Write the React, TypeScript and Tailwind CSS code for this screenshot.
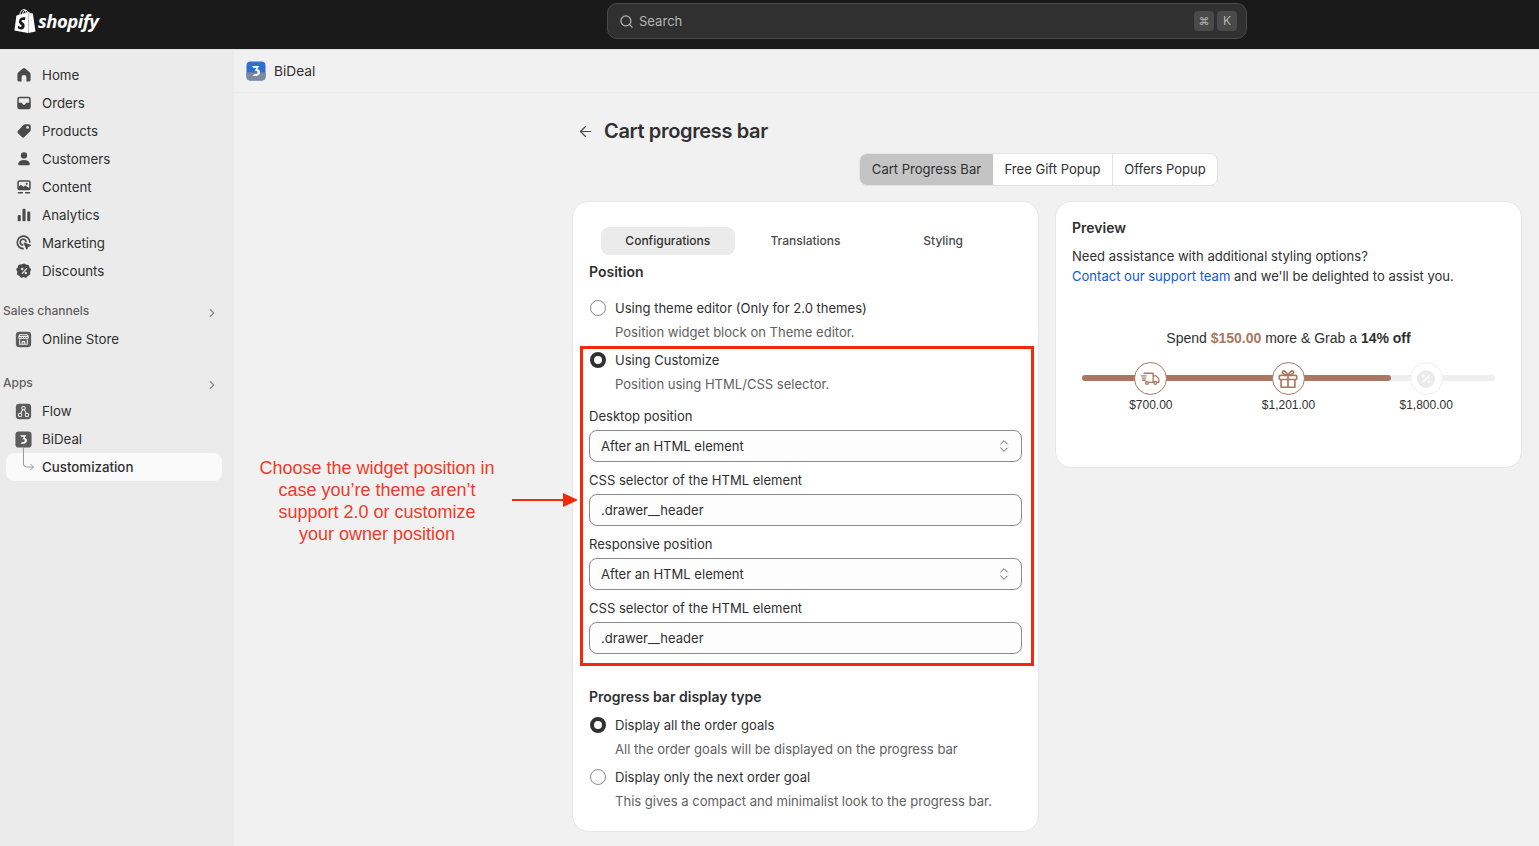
import { ArrowLeft, ChevronRight, ChevronsUpDown, Search } from 'lucide-react';
import { SiShopify } from 'react-icons/si';
import { clsx } from 'clsx';

const ic = "w-[18px] h-[18px] text-[#4a4a4a] shrink-0";

function HomeIcon() {
  return (
    <svg viewBox="0 0 20 20" className={ic} fill="currentColor">
      <path d="M8.600 2.900a2.200 2.200 0 0 1 2.800 0l5 4.200c.6.5.9 1.100.9 1.900v6.200c0 1.100-.9 2-2 2h-2.600v-4.400a2.700 2.700 0 0 0-5.400 0v4.400h-2.600c-1.100 0-2-.9-2-2v-6.200c0-.8.3-1.400.9-1.900z" />
    </svg>
  );
}

function OrdersIcon() {
  return (
    <svg viewBox="0 0 20 20" className={ic} fill="currentColor">
      <path fillRule="evenodd" d="M5 3h10a2.500 2.500 0 0 1 2.500 2.500v9A2.500 2.500 0 0 1 15 17H5a2.500 2.500 0 0 1-2.500-2.500v-9A2.500 2.500 0 0 1 5 3m-.8 6.800h2.600c.7 0 1.100.4 1.400 1 .4.800 1.100 1.300 1.800 1.300s1.400-.5 1.800-1.300c.3-.6.7-1 1.400-1h2.600V5.500c0-.5-.4-.9-.8-.9H5c-.4 0-.8.4-.8.900z" />
    </svg>
  );
}

function TagIcon() {
  return (
    <svg viewBox="0 0 20 20" className={ic} fill="currentColor">
      <path fillRule="evenodd" d="M11.500 2.500h4a2 2 0 0 1 2 2v4c0 .8-.3 1.500-.9 2l-6.200 6.200a2 2 0 0 1-2.800 0l-4.300-4.300a2 2 0 0 1 0-2.800L9.500 3.400c.5-.6 1.200-.9 2-.9m2.500 5a1.500 1.500 0 1 0 0-3 1.500 1.500 0 0 0 0 3" />
    </svg>
  );
}

function PersonIcon() {
  return (
    <svg viewBox="0 0 20 20" className={ic} fill="currentColor">
      <circle cx="10" cy="6" r="3.500" />
      <path d="M10 11c-3.500 0-6.200 1.800-6.500 4.300-.1 1 .7 1.700 1.600 1.700h9.800c.9 0 1.700-.7 1.600-1.700-.3-2.500-3-4.300-6.500-4.300" />
    </svg>
  );
}

function ContentIcon() {
  return (
    <svg viewBox="0 0 20 20" className={ic} fill="currentColor">
      <path fillRule="evenodd" d="M5 2.500h10A2.500 2.500 0 0 1 17.500 5v6a2.500 2.500 0 0 1-2.500 2.500H5A2.500 2.500 0 0 1 2.500 11V5A2.500 2.500 0 0 1 5 2.500M4.200 9.800l2.500-2.300 2.600 2.200 2.200-1.500 4.300 2.800V5c0-.5-.4-.8-.8-.8H5c-.4 0-.8.3-.8.800z" />
      <circle cx="13" cy="6.500" r="1.200" />
      <rect x="3" y="15.500" width="6" height="1.600" rx=".8" />
      <rect x="11" y="15.500" width="6" height="1.600" rx=".8" />
    </svg>
  );
}

function BarsIcon() {
  return (
    <svg viewBox="0 0 20 20" className={ic} fill="currentColor">
      <rect x="3" y="10" width="3.400" height="7" rx="1.200" />
      <rect x="8.300" y="3" width="3.400" height="14" rx="1.200" />
      <rect x="13.600" y="6" width="3.400" height="11" rx="1.200" />
    </svg>
  );
}

function TargetIcon() {
  return (
    <svg viewBox="0 0 20 20" className={ic} fill="none" stroke="currentColor">
      <path strokeWidth="1.800" strokeLinecap="round" d="M9 16.300A7 7 0 1 1 16.500 9" />
      <path strokeWidth="1.800" strokeLinecap="round" d="M8.500 12.200a3.200 3.200 0 1 1 3.700-3.700" />
      <path fill="currentColor" strokeWidth="1" strokeLinejoin="round" d="m10 10 7.500 2.600-3 1.300-1.400 3.100z" />
    </svg>
  );
}

function DiscountIcon() {
  return (
    <svg viewBox="0 0 20 20" className={ic} fill="currentColor">
      <path fillRule="evenodd" d="M8.500 2.300a2.200 2.200 0 0 1 3 0l.9.8 1.200-.1a2.200 2.200 0 0 1 2.300 2l.1 1.200 1 .8a2.200 2.200 0 0 1 .3 3l-.8 1 .4 1.200a2.200 2.200 0 0 1-1.500 2.700l-1.200.3-.6 1.100a2.200 2.200 0 0 1-2.900.9l-1.100-.5-1.100.5a2.200 2.200 0 0 1-2.900-.9l-.6-1.100-1.200-.3A2.200 2.200 0 0 1 2.300 12l.4-1.200-.8-1a2.200 2.200 0 0 1 .3-3l1-.8.100-1.200a2.200 2.200 0 0 1 2.300-2l1.200.1zM12.800 6.300l-5.600 6.400 1 .9 5.600-6.400zM8 6.500a1.300 1.300 0 1 0 0 2.600 1.300 1.300 0 0 0 0-2.600m4 4.400a1.300 1.300 0 1 0 0 2.600 1.300 1.300 0 0 0 0-2.600" />
    </svg>
  );
}

function StoreIcon() {
  return (
    <svg viewBox="0 0 20 20" className="w-[17px] h-[17px] shrink-0">
      <rect x="1" y="1" width="18" height="18" rx="4" fill="#5c5c5c" />
      <path d="M5 6.500h10M4.500 6.500 5.500 4.500h9l1 2v1.200a1.400 1.400 0 0 1-2.800 0 1.400 1.400 0 0 1-2.700 0 1.400 1.400 0 0 1-2.700 0 1.400 1.400 0 0 1-2.800 0zM5.500 10v5.500h9V10M8.500 15.500V12.500h3v3" fill="none" stroke="#f4f4f4" strokeWidth="1.200" strokeLinejoin="round" />
    </svg>
  );
}

function FlowIcon() {
  return (
    <svg viewBox="0 0 20 20" className="w-[17px] h-[17px] shrink-0">
      <rect x="1" y="1" width="18" height="18" rx="4" fill="#5c5c5c" />
      <g fill="none" stroke="#f4f4f4" strokeWidth="1.200">
        <circle cx="10" cy="6" r="2" />
        <circle cx="6" cy="14" r="2" />
        <circle cx="14" cy="14" r="2" />
        <path d="m9 7.800-2.200 4.400M11 7.800l2.200 4.400" />
      </g>
    </svg>
  );
}

function BiDealLogo({ size, gray }: { size: string; gray?: boolean }) {
  return (
    <svg viewBox="0 0 20 20" className={clsx(size, "shrink-0")}>
      <rect x="0.500" y="0.500" width="19" height="19" rx="4" fill={gray ? "#5c5c5c" : "#2f6fd0"} />
      {!gray && <path d="M0.500 11.500h19v4a4 4 0 0 1-4 4h-11a4 4 0 0 1-4-4z" fill="#7d8a9c" />}
      <path d="M6 5h7.500l-2.500 3.300c2.300.2 3 1.300 3 2.900 0 2.200-1.700 3.800-4.500 3.800H6.500l1.500-1.800c2 .3 3.600-.2 3.600-1.900 0-1.200-1-1.700-3.100-1.600l2-2.800H7.500z" fill="#fff" />
    </svg>
  );
}

function NavItem({ icon, label, active }: { icon: React.ReactNode; label: string; active?: boolean }) {
  return (
    <div className={clsx("relative h-7 ml-[6px] mr-3 flex items-center pl-[9px] gap-[10px] rounded-lg", active && "bg-[#fafafa]")}>
      <span className="w-[17px] flex justify-center">{icon}</span>
      <span className={clsx("pt-[2px] text-[#303030] text-[13.300px]", active && "font-medium")}>{label}</span>
    </div>
  );
}

function SectionLabel({ label }: { label: string }) {
  return (
    <div className="h-7 flex items-center justify-between pl-[3px] pr-[15px] text-[12px] font-medium text-[#616161]">
      <span>{label}</span>
      <ChevronRight size={14} className="text-[#8a8a8a] mt-[3px]" />
    </div>
  );
}

function Sidebar() {
  return (
    <aside className="w-[234px] shrink-0 bg-[#ebebeb] pt-[11px]">
      <NavItem icon={<HomeIcon />} label="Home" />
      <NavItem icon={<OrdersIcon />} label="Orders" />
      <NavItem icon={<TagIcon />} label="Products" />
      <NavItem icon={<PersonIcon />} label="Customers" />
      <NavItem icon={<ContentIcon />} label="Content" />
      <NavItem icon={<BarsIcon />} label="Analytics" />
      <NavItem icon={<TargetIcon />} label="Marketing" />
      <NavItem icon={<DiscountIcon />} label="Discounts" />
      <div className="mt-[12px]">
        <SectionLabel label="Sales channels" />
        <NavItem icon={<StoreIcon />} label="Online Store" />
      </div>
      <div className="mt-[16px]">
        <SectionLabel label="Apps" />
        <NavItem icon={<FlowIcon />} label="Flow" />
        <NavItem icon={<BiDealLogo size="w-[17px] h-[17px]" gray />} label="BiDeal" />
        <div className="relative">
          <NavItem icon={null} label="Customization" active />
          <svg className="absolute left-[20px] top-[-5px] text-[#9a9a9a]" width="16" height="24" viewBox="0 0 16 24" fill="none" stroke="currentColor" strokeWidth="1">
            <path d="M3.500 0v16a3 3 0 0 0 3 3h7M10.500 16l3 3-3 3" />
          </svg>
        </div>
      </div>
    </aside>
  );
}

function Radio({ checked, label, help }: { checked?: boolean; label: string; help: string }) {
  return (
    <div className="h-[52px] pl-[1px]">
      <div className="h-6 flex items-center gap-[9px]">
        {checked ? (
          <span className="-mt-[2px] w-4 h-4 rounded-full border-[4.500px] border-[#303030] bg-white shrink-0" />
        ) : (
          <span className="-mt-[2px] w-4 h-4 rounded-full border border-[#8a8a8a] bg-[#fdfdfd] shrink-0" />
        )}
        <span className="text-[#303030]">{label}</span>
      </div>
      <div className="h-6 pl-[25px] flex items-center text-[#616161]">{help}</div>
    </div>
  );
}

function Field({ label, value, select, className }: { label: string; value: string; select?: boolean; className?: string }) {
  return (
    <div className={className}>
      <div className="h-[20px] flex items-center text-[#303030]">{label}</div>
      <div className="mt-[3px] h-8 rounded-lg border border-[#8a8a8a] bg-[#fdfdfd] px-[11px] flex items-center justify-between text-[#303030]">
        <span className="pt-[2px]">{value}</span>
        {select && <ChevronsUpDown size={16} strokeWidth={1.300} className="text-[#4a4a4a] mr-[-2px]" />}
      </div>
    </div>
  );
}

function TruckIcon() {
  return (
    <svg viewBox="0 0 24 24" className="w-[21px] h-[21px] text-[#a87860]" fill="none" stroke="currentColor" strokeWidth="1.500" strokeLinejoin="round">
      <path d="M4 6h11v10.500h-5M15 9h3.500l3 3.500v4h-2M15 16.500h1" />
      <circle cx="8" cy="17" r="1.600" />
      <circle cx="17.500" cy="17" r="1.600" />
      <path strokeLinecap="round" d="M2 9h5M2.500 11.500h4M3 14h3" />
    </svg>
  );
}

function GiftIcon() {
  return (
    <svg viewBox="0 0 24 24" className="w-[22px] h-[22px] text-[#a87860]" fill="none" stroke="currentColor" strokeWidth="1.800" strokeLinejoin="round">
      <rect x="2.500" y="8" width="19" height="4.500" rx="1" />
      <path d="M4.500 12.500V21h15v-8.500M12 8v13M12 8C10 4 8 2.500 6.500 3.500S6.500 7.500 12 8c5.500-.5 7-3.500 5.500-4.500S14 4 12 8" />
    </svg>
  );
}

function PercentIcon() {
  return (
    <svg viewBox="0 0 20 20" className="w-[20px] h-[20px]" fill="#ebebeb">
      <path fillRule="evenodd" d="M10 1a9 9 0 1 1 0 18 9 9 0 0 1 0-18m3 5-7 7 1 1 7-7zM7 5.800a1.400 1.400 0 1 0 0 2.800 1.400 1.400 0 0 0 0-2.800m6 5.600a1.400 1.400 0 1 0 0 2.800 1.400 1.400 0 0 0 0-2.800" />
    </svg>
  );
}

function Milestone({ icon, price, done }: { icon: React.ReactNode; price: string; done?: boolean }) {
  return (
    <div className="relative flex flex-col items-center">
      <div className={clsx("w-[33px] h-[33px] rounded-full bg-white border flex items-center justify-center", done ? "border-[#a87860]" : "border-[#eeeeee]")}>
        {icon}
      </div>
      <div className="text-[12px] leading-[20px] text-[#303030] font-['Liberation_Sans',sans-serif]">{price}</div>
    </div>
  );
}

function Preview() {
  return (
    <section className="w-[467px] h-[267px] bg-white rounded-2xl border border-[#e6e6e6] px-[16px] pt-[16px]">
      <h2 className="text-[14px] font-semibold text-[#303030] leading-[20px]">Preview</h2>
      <p className="mt-[8px] leading-[20px] text-[#303030]">
        Need assistance with additional styling options?<br />
        <span className="text-[#1358d6]">Contact our support team</span> and we'll be delighted to assist you.
      </p>
      <div className="mt-[42px] text-center text-[14px] leading-[20px] text-[#303030] font-['Liberation_Sans',sans-serif]">
        Spend <span className="font-bold text-[#a87860]">$150.00</span> more &amp; Grab a <span className="font-bold">14% off</span>
      </div>
      <div className="relative mt-[14px] mx-[10px] grid grid-cols-3">
        <div className="absolute left-0 right-0 top-[13px] h-[6px] rounded-full bg-[#eeeeee]" />
        <div className="absolute left-0 w-[309px] top-[13px] h-[6px] rounded-full bg-[#a87860]" />
        <Milestone icon={<TruckIcon />} price="$700.00" done />
        <Milestone icon={<GiftIcon />} price="$1,201.00" done />
        <Milestone icon={<PercentIcon />} price="$1,800.00" />
      </div>
    </section>
  );
}

function ConfigCard() {
  return (
    <section className="w-[467px] h-[631px] bg-white rounded-2xl border border-[#e6e6e6] px-[16px] pt-[25px]">
      <div className="grid grid-cols-3 px-[12px] gap-[4px] text-[12px] font-medium">
        <div className="h-7 rounded-lg bg-[#ebebeb] flex items-center justify-center text-[#303030]">Configurations</div>
        <div className="h-7 flex items-center justify-center text-[#4a4a4a]">Translations</div>
        <div className="h-7 flex items-center justify-center text-[#4a4a4a]">Styling</div>
      </div>
      <h3 className="mt-[7px] text-[14px] font-semibold text-[#303030] leading-[20px]">Position</h3>
      <div className="mt-[15px]"><Radio label="Using theme editor (Only for 2.0 themes)" help="Position widget block on Theme editor." /></div>
      <Radio checked label="Using Customize" help="Position using HTML/CSS selector." />
      <Field className="mt-[6px]" label="Desktop position" value="After an HTML element" select />
      <Field className="mt-[9px]" label="CSS selector of the HTML element" value=".drawer__header" />
      <Field className="mt-[9px]" label="Responsive position" value="After an HTML element" select />
      <Field className="mt-[9px]" label="CSS selector of the HTML element" value=".drawer__header" />
      <h3 className="mt-[33px] text-[14px] font-semibold text-[#303030] leading-[20px]">Progress bar display type</h3>
      <div className="mt-[7px]"><Radio checked label="Display all the order goals" help="All the order goals will be displayed on the progress bar" /></div>
      <Radio label="Display only the next order goal" help="This gives a compact and minimalist look to the progress bar." />
    </section>
  );
}

export default function App() {
  return (
    <div className="relative h-screen overflow-hidden flex flex-col bg-[#f1f1f1] font-['Inter',sans-serif] text-[13.050px]">
      {/* Top bar */}
      <header className="h-[50px] shrink-0 bg-[#1a1a1a] border-b border-[#e3e3e3] pb-[7px] flex items-center">
        <div className="w-[607px] shrink-0 pl-[13px] flex items-center gap-[1px] text-white">
          <SiShopify size={24} />
          <span className="font-['Open_Sans',sans-serif] italic font-bold text-[18.500px] tracking-[-0.5px]">shopify</span>
        </div>
        <div className="w-[640px] h-9 rounded-[10px] bg-[#303030] border border-[#4a4a4a] flex items-center pl-[11px] pr-[9px] gap-[5px] text-[#b5b5b5]">
          <Search size={15} />
          <span className="flex-1 pt-[1px]">Search</span>
          <span className="flex gap-[3px]">
            <span className="w-5 h-[20px] rounded bg-[#4a4a4a] text-[11px] flex items-center justify-center">⌘</span>
            <span className="w-5 h-[20px] rounded bg-[#4a4a4a] text-[12px] flex items-center justify-center">K</span>
          </span>
        </div>
      </header>

      <div className="flex-1 flex min-h-0">
        <Sidebar />
        <main className="flex-1 min-w-0">
          <div className="h-[43px] border-b border-[#ebebeb] pl-[12px] flex items-center gap-[8px] text-[#303030]">
            <BiDealLogo size="w-5 h-5" />
            <span className="text-[13.700px]">BiDeal</span>
          </div>
          <div className="ml-[338px] w-[950px]">
            <div className="mt-[24px] h-7 flex items-center pl-[5px] gap-[10px]">
              <ArrowLeft size={17} strokeWidth={1.700} className="text-[#4a4a4a]" />
              <h1 className="text-[20px] font-semibold text-[#303030] tracking-[-0.35px]">Cart progress bar</h1>
            </div>
            <div className="mt-[8px] ml-[287px] w-[359px] h-[33px] flex bg-white rounded-lg border border-[#e3e3e3] overflow-hidden text-[#303030]">
              <div className="w-[133px] bg-[#c4c4c4] flex items-center justify-center">Cart Progress Bar</div>
              <div className="w-[120px] border-r border-[#e3e3e3] flex items-center justify-center">Free Gift Popup</div>
              <div className="flex-1 flex items-center justify-center">Offers Popup</div>
            </div>
            <div className="mt-[15px] flex items-start gap-[16px]">
              <ConfigCard />
              <Preview />
            </div>
          </div>
        </main>
      </div>

      {/* Annotation drawn over the screenshot */}
      <div className="absolute left-[580px] top-[346px] w-[454px] h-[320px] border-[3px] border-[#f5290a] pointer-events-none" />
      <div className="absolute left-[259px] top-[457px] w-[236px] text-center text-[18px] leading-[22px] text-[#ee3b2b] font-['Liberation_Sans',sans-serif]">
        Choose the widget position in case you’re theme aren’t support 2.0 or customize your owner position
      </div>
      <svg className="absolute left-[512px] top-[492px]" width="66" height="16" viewBox="0 0 66 16">
        <path d="M0 8h55" stroke="#f5290a" strokeWidth="2" />
        <path d="M51 1l15 7-15 7z" fill="#f5290a" />
      </svg>
    </div>
  );
}
